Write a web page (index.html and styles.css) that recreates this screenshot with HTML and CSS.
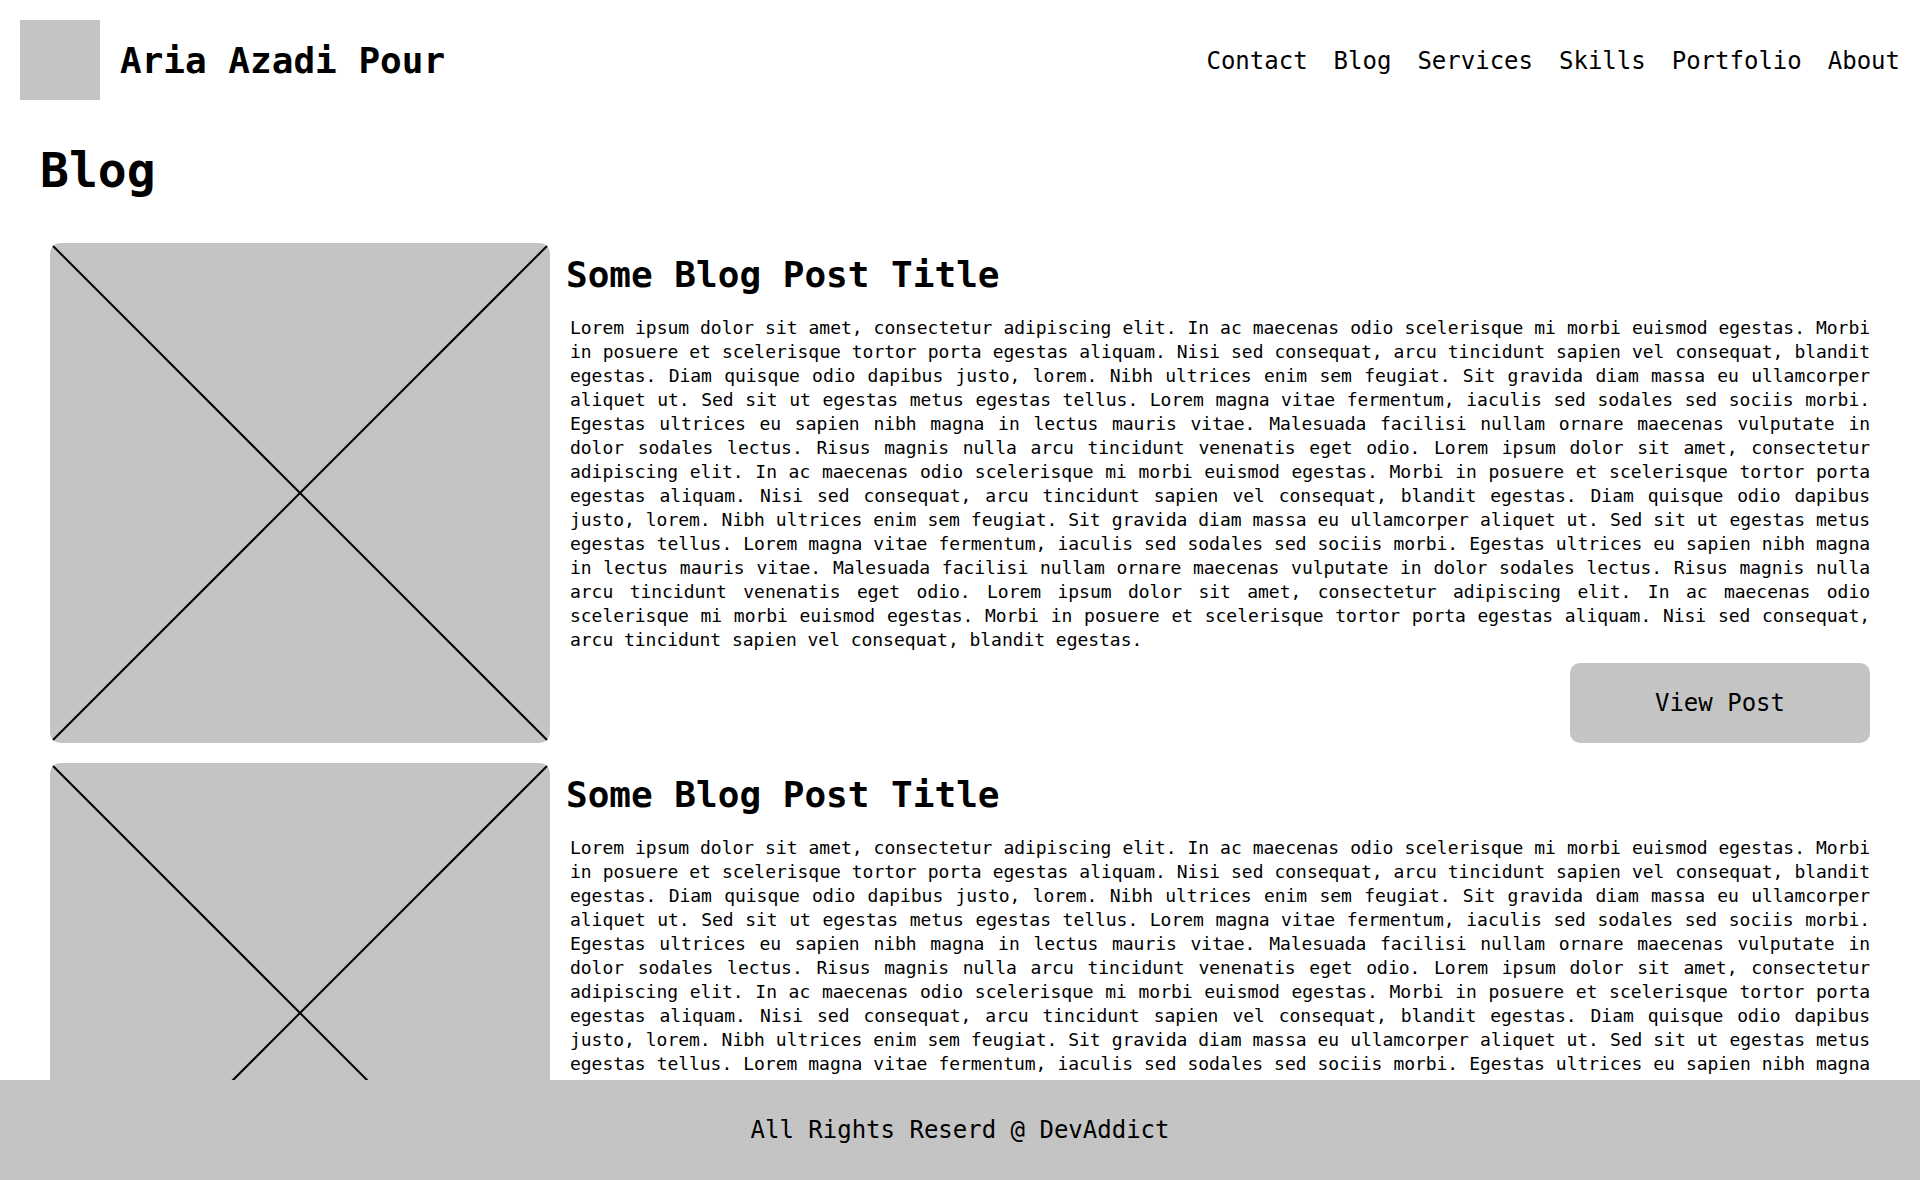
FILE: index.html
```html
<!DOCTYPE html>
<html lang="en">
<head>
<meta charset="utf-8">
<title>Aria Azadi Pour - Blog</title>
<link rel="stylesheet" href="styles.css">
</head>
<body>
<header class="site-header">
  <div class="brand">
    <div class="logo"></div>
    <span class="brand-name">Aria Azadi Pour</span>
  </div>
  <nav class="nav">
    <a href="#">Contact</a>
    <a href="#">Blog</a>
    <a href="#">Services</a>
    <a href="#">Skills</a>
    <a href="#">Portfolio</a>
    <a href="#">About</a>
  </nav>
</header>

<main class="main">
  <h1 class="page-title">Blog</h1>
  <section class="posts">
    <article class="post">
      <div class="thumb">
        <svg viewBox="0 0 500 500" preserveAspectRatio="none" class="thumb-x"><line x1="0" y1="0" x2="500" y2="500"/><line x1="500" y1="0" x2="0" y2="500"/></svg>
      </div>
      <div class="post-body">
        <h2 class="post-title">Some Blog Post Title</h2>
        <p class="post-text">Lorem ipsum dolor sit amet, consectetur adipiscing elit. In ac maecenas odio scelerisque mi morbi euismod egestas. Morbi in posuere et scelerisque tortor porta egestas aliquam. Nisi sed consequat, arcu tincidunt sapien vel consequat, blandit egestas. Diam quisque odio dapibus justo, lorem. Nibh ultrices enim sem feugiat. Sit gravida diam massa eu ullamcorper aliquet ut. Sed sit ut egestas metus egestas tellus. Lorem magna vitae fermentum, iaculis sed sodales sed sociis morbi. Egestas ultrices eu sapien nibh magna in lectus mauris vitae. Malesuada facilisi nullam ornare maecenas vulputate in dolor sodales lectus. Risus magnis nulla arcu tincidunt venenatis eget odio. Lorem ipsum dolor sit amet, consectetur adipiscing elit. In ac maecenas odio scelerisque mi morbi euismod egestas. Morbi in posuere et scelerisque tortor porta egestas aliquam. Nisi sed consequat, arcu tincidunt sapien vel consequat, blandit egestas. Diam quisque odio dapibus justo, lorem. Nibh ultrices enim sem feugiat. Sit gravida diam massa eu ullamcorper aliquet ut. Sed sit ut egestas metus egestas tellus. Lorem magna vitae fermentum, iaculis sed sodales sed sociis morbi. Egestas ultrices eu sapien nibh magna in lectus mauris vitae. Malesuada facilisi nullam ornare maecenas vulputate in dolor sodales lectus. Risus magnis nulla arcu tincidunt venenatis eget odio. Lorem ipsum dolor sit amet, consectetur adipiscing elit. In ac maecenas odio scelerisque mi morbi euismod egestas. Morbi in posuere et scelerisque tortor porta egestas aliquam. Nisi sed consequat, arcu tincidunt sapien vel consequat, blandit egestas.</p>
        <button class="view-btn">View Post</button>
      </div>
    </article>
    <article class="post">
      <div class="thumb">
        <svg viewBox="0 0 500 500" preserveAspectRatio="none" class="thumb-x"><line x1="0" y1="0" x2="500" y2="500"/><line x1="500" y1="0" x2="0" y2="500"/></svg>
      </div>
      <div class="post-body">
        <h2 class="post-title">Some Blog Post Title</h2>
        <p class="post-text">Lorem ipsum dolor sit amet, consectetur adipiscing elit. In ac maecenas odio scelerisque mi morbi euismod egestas. Morbi in posuere et scelerisque tortor porta egestas aliquam. Nisi sed consequat, arcu tincidunt sapien vel consequat, blandit egestas. Diam quisque odio dapibus justo, lorem. Nibh ultrices enim sem feugiat. Sit gravida diam massa eu ullamcorper aliquet ut. Sed sit ut egestas metus egestas tellus. Lorem magna vitae fermentum, iaculis sed sodales sed sociis morbi. Egestas ultrices eu sapien nibh magna in lectus mauris vitae. Malesuada facilisi nullam ornare maecenas vulputate in dolor sodales lectus. Risus magnis nulla arcu tincidunt venenatis eget odio. Lorem ipsum dolor sit amet, consectetur adipiscing elit. In ac maecenas odio scelerisque mi morbi euismod egestas. Morbi in posuere et scelerisque tortor porta egestas aliquam. Nisi sed consequat, arcu tincidunt sapien vel consequat, blandit egestas. Diam quisque odio dapibus justo, lorem. Nibh ultrices enim sem feugiat. Sit gravida diam massa eu ullamcorper aliquet ut. Sed sit ut egestas metus egestas tellus. Lorem magna vitae fermentum, iaculis sed sodales sed sociis morbi. Egestas ultrices eu sapien nibh magna in lectus mauris vitae. Malesuada facilisi nullam ornare maecenas vulputate in dolor sodales lectus. Risus magnis nulla arcu tincidunt venenatis eget odio. Lorem ipsum dolor sit amet, consectetur adipiscing elit. In ac maecenas odio scelerisque mi morbi euismod egestas. Morbi in posuere et scelerisque tortor porta egestas aliquam. Nisi sed consequat, arcu tincidunt sapien vel consequat, blandit egestas.</p>
        <button class="view-btn">View Post</button>
      </div>
    </article>
  </section>
</main>

<footer class="site-footer">All Rights Reserd @ DevAddict</footer>
</body>
</html>
```

FILE: styles.css
```css
* {
  box-sizing: border-box;
}

html, body {
  margin: 0;
  padding: 0;
}

body {
  font-family: "DejaVu Sans Mono", "Liberation Mono", monospace;
  color: #000;
  background: #fff;
  padding-bottom: 100px;
}

.site-header {
  display: flex;
  align-items: center;
  justify-content: space-between;
  padding: 20px;
  height: 120px;
}

.brand {
  display: flex;
  align-items: center;
  gap: 20px;
}

.logo {
  width: 80px;
  height: 80px;
  background: #c4c4c4;
}

.brand-name {
  font-size: 36px;
  font-weight: 700;
  line-height: 44px;
  padding-top: 2px;
}

.nav {
  display: flex;
  gap: 26px;
  padding-top: 2px;
}

.nav a {
  color: #000;
  text-decoration: none;
  font-size: 24px;
  line-height: 30px;
}

.main {
  padding: 0 40px;
}

.page-title {
  margin: 22px 0 45px;
  font-size: 48px;
  line-height: 56px;
  font-weight: 700;
}

.posts {
  display: flex;
  flex-direction: column;
  gap: 20px;
  padding: 0 10px;
}

.post {
  display: flex;
  gap: 14px;
  height: 500px;
}

.thumb {
  flex: 0 0 500px;
  width: 500px;
  height: 500px;
  background: #c4c4c4;
  border-radius: 10px;
  overflow: hidden;
}

.thumb-x {
  display: block;
  width: 100%;
  height: 100%;
}

.thumb-x line {
  stroke: #000;
  stroke-width: 2;
}

.post-body {
  flex: 1;
  display: flex;
  flex-direction: column;
  min-width: 0;
}

.post-title {
  margin: 10px 0 19px;
  padding-left: 2px;
  font-size: 36px;
  line-height: 44px;
  font-weight: 700;
}

.post-text {
  margin: 0;
  padding-left: 6px;
  font-size: 18px;
  line-height: 24px;
  letter-spacing: -0.04px;
  text-align: justify;
}

.view-btn {
  margin-top: auto;
  align-self: flex-end;
  width: 300px;
  height: 80px;
  border: none;
  border-radius: 10px;
  background: #c4c4c4;
  color: #000;
  font-family: "DejaVu Sans Mono", "Liberation Mono", monospace;
  font-size: 24px;
  cursor: pointer;
}

.site-footer {
  position: fixed;
  left: 0;
  right: 0;
  bottom: 0;
  height: 100px;
  display: flex;
  align-items: center;
  justify-content: center;
  background: #c4c4c4;
  font-size: 24px;
}
```
